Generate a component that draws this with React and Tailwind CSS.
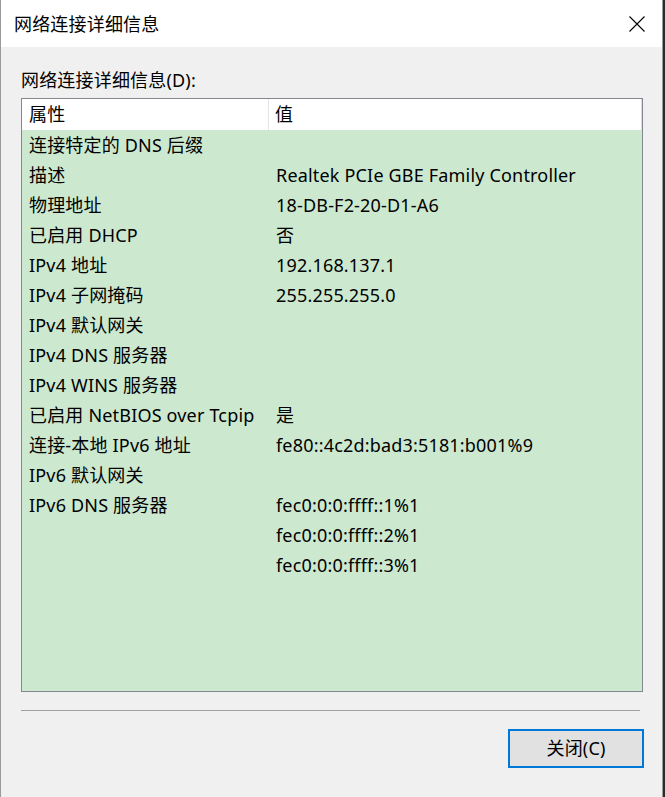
import React from "react";

const rows = [
  ["连接特定的 DNS 后缀", ""],
  ["描述", "Realtek PCIe GBE Family Controller"],
  ["物理地址", "18-DB-F2-20-D1-A6"],
  ["已启用 DHCP", "否"],
  ["IPv4 地址", "192.168.137.1"],
  ["IPv4 子网掩码", "255.255.255.0"],
  ["IPv4 默认网关", ""],
  ["IPv4 DNS 服务器", ""],
  ["IPv4 WINS 服务器", ""],
  ["已启用 NetBIOS over Tcpip", "是"],
  ["连接-本地 IPv6 地址", "fe80::4c2d:bad3:5181:b001%9"],
  ["IPv6 默认网关", ""],
  ["IPv6 DNS 服务器", "fec0:0:0:ffff::1%1"],
  ["", "fec0:0:0:ffff::2%1"],
  ["", "fec0:0:0:ffff::3%1"],
];

const font = {
  fontFamily: '"Noto Sans", "Noto Sans CJK SC", sans-serif',
};

export default function App() {
  return (
    <div
      className="flex w-[665px] h-[797px] bg-[#2b2b2b] text-black text-[18px] tracking-[0.18px]"
      style={font}
    >
      <div className="flex flex-col w-[663px] h-full border-l border-r border-[#9a9a9a] bg-[#f0f0f0]">
        {/* title bar */}
        <div className="flex items-center justify-between h-[47px] bg-white pl-[13px] pr-[17px]">
          <span className="leading-[24px]">网络连接详细信息</span>
          <svg width="16" height="16" viewBox="0 0 16 16">
            <path d="M0.5 0.5L15.5 15.5M15.5 0.5L0.5 15.5" stroke="#000" strokeWidth="1.1" fill="none" />
          </svg>
        </div>

        <div className="flex flex-col flex-1 pl-[20px]">
          <div className="mt-[21px] leading-[24px]">网络连接详细信息(D):</div>

          {/* list view */}
          <div className="mt-[6px] w-[622px] h-[594px] border border-[#828790] bg-[#cce8cf] flex flex-col">
            <div className="flex h-[31px] bg-white items-center mr-[1px]">
              <div className="w-[247px] pl-[7px] h-full flex items-center border-r border-[#e5e5e5]">属性</div>
              <div className="pl-[6px]">值</div>
            </div>
            {rows.map(([k, v], i) => (
              <div key={i} className="flex h-[30px] items-center whitespace-nowrap">
                <div className="w-[247px] pl-[7px]">{k}</div>
                <div className="pl-[7px]">{v}</div>
              </div>
            ))}
          </div>

          <div className="mt-[18px] w-[619px] h-[1px] bg-[#a0a0a0]" />

          <div className="flex justify-end mt-[18px] pr-[18px]">
            <button className="w-[136px] h-[39px] border-2 border-[#0078d7] bg-[#e1e1e1] flex items-center justify-center">
              关闭(C)
            </button>
          </div>
        </div>
      </div>
    </div>
  );
}
